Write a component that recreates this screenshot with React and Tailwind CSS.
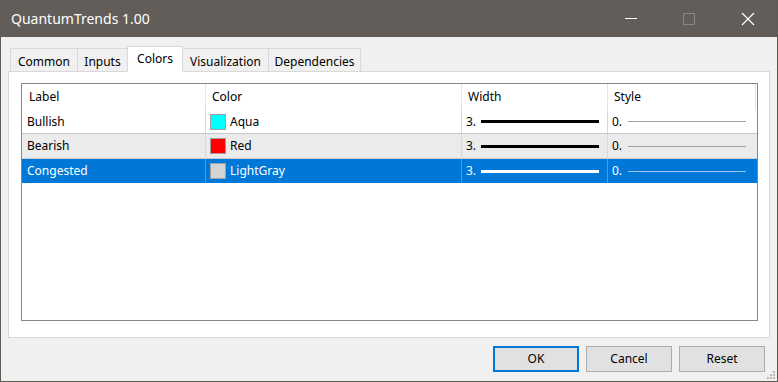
import React from "react";

const font = { fontFamily: '"Noto Sans", "Open Sans", sans-serif' };

const rows = [
  { label: "Bullish", color: "#00ffff", name: "Aqua", bg: "bg-white", sel: false, h: "h-[24px]" },
  { label: "Bearish", color: "#ff0000", name: "Red", bg: "bg-[#ebebeb]", sel: false, h: "h-[25px]" },
  { label: "Congested", color: "#d3d3d3", name: "LightGray", bg: "bg-[#0078d7]", sel: true, h: "h-[24px]" },
];

function Row({ r, last }) {
  const txt = r.sel ? "text-white" : "text-black";
  const div = r.sel ? "border-[#4d9de0]" : "border-[#d9d9d9]";
  return (
    <div
      className={`flex ${r.h} items-center ${r.bg} ${txt} ${last ? "" : "border-b border-[#c9c9c9]"}`}
    >
      <div className={`w-[184px] h-full flex items-center pl-[5px] border-r ${div}`}>{r.label}</div>
      <div className={`w-[256px] h-full flex items-center pl-[4px] border-r ${div}`}>
        <span
          className="w-[16px] h-[16px] border border-[#a0a0a0] mr-[4px]"
          style={{ backgroundColor: r.color }}
        />
        {r.name}
      </div>
      <div className={`w-[146px] h-full flex items-center pl-[4px] border-r ${div}`}>
        <span className="w-[15px]">3.</span>
        <span className={`w-[118px] h-[3px] ${r.sel ? "bg-white" : "bg-black"}`} />
      </div>
      <div className="w-[148px] h-full flex items-center pl-[4px]">
        <span className="w-[16px]">0.</span>
        <span className={`w-[118px] h-px ${r.sel ? "bg-[#9cc6ec]" : "bg-[#a0a0a0]"}`} />
      </div>
    </div>
  );
}

export default function App() {
  return (
    <div
      className="w-[778px] h-[382px] flex flex-col border-x border-b border-[#5e5a56] text-[12px] overflow-hidden"
      style={font}
    >
      {/* title bar */}
      <div className="h-[37px] shrink-0 bg-[#625d58] flex items-center -mx-px">
        <div className="pl-[11px] text-white text-[14px] flex-1">QuantumTrends 1.00</div>
        <div className="flex items-center h-full">
          <div className="w-[58px] h-full flex items-center justify-center">
            <span className="w-[12px] h-px bg-white" />
          </div>
          <div className="w-[58px] h-full flex items-center justify-center">
            <span className="w-[12px] h-[12px] border border-[#8c8782]" />
          </div>
          <div className="w-[60px] h-full flex items-center justify-center pr-[1px]">
            <svg width="14" height="14" viewBox="0 0 14 14">
              <path d="M1 1 L13 13 M13 1 L1 13" stroke="white" strokeWidth="1.2" />
            </svg>
          </div>
        </div>
      </div>

      {/* body */}
      <div className="flex-1 bg-[#f0f0f0] flex flex-col pt-[9px] px-[7px] relative">
        {/* tabs */}
        <div className="flex items-end ml-[2px] h-[25px] text-black">
          <div className="w-[67px] h-[23px] border-l border-t border-[#d9d9d9] flex items-center justify-center pt-[3px]">Common</div>
          <div className="w-[50px] h-[23px] border-l border-t border-[#d9d9d9] flex items-center justify-center pt-[3px]">Inputs</div>
          <div className="relative z-10 w-[56px] h-[26px] -mb-px bg-white border-l border-t border-r border-[#d9d9d9] flex items-center justify-center pb-[2px]">Colors</div>
          <div className="w-[85px] h-[23px] border-t border-[#d9d9d9] flex items-center justify-center pt-[3px]">Visualization</div>
          <div className="w-[93px] h-[23px] border-l border-t border-r border-[#d9d9d9] flex items-center justify-center pt-[3px]">Dependencies</div>
        </div>

        {/* panel */}
        <div className="h-[267px] bg-white border border-[#d9d9d9] pt-[11px] pl-[12px] pr-[11px] pb-[16px] flex">
          <div className="flex-1 border border-[#828790] bg-white text-black flex flex-col">
            <div className="flex h-[26px]">
              <div className="w-[184px] flex items-center pl-[7px] border-r border-[#e5e5e5]">Label</div>
              <div className="w-[256px] flex items-center pl-[6px] border-r border-[#e5e5e5]">Color</div>
              <div className="w-[146px] flex items-center pl-[6px] border-r border-[#e5e5e5]">Width</div>
              <div className="w-[148px] flex items-center pl-[6px] border-r border-[#e5e5e5]">Style</div>
            </div>
            {rows.map((r, i) => (
              <Row key={r.label} r={r} last={i === rows.length - 1} />
            ))}
          </div>
        </div>

        {/* buttons */}
        <div className="flex justify-end gap-[7px] mt-[8px] mr-[5px] text-black">
          <div className="w-[86px] h-[26px] bg-[#e1e1e1] border-2 border-[#0078d7] flex items-center justify-center">OK</div>
          <div className="w-[86px] h-[26px] bg-[#e1e1e1] border border-[#adadad] flex items-center justify-center">Cancel</div>
          <div className="w-[86px] h-[26px] bg-[#e1e1e1] border border-[#adadad] flex items-center justify-center">Reset</div>
        </div>

        {/* size grip */}
        <svg className="absolute right-[1px] bottom-[1px]" width="10" height="10" viewBox="0 0 10 10">
          <rect x="7" y="1" width="2" height="2" fill="#b8b8b8" />
          <rect x="4" y="4" width="2" height="2" fill="#b8b8b8" />
          <rect x="7" y="4" width="2" height="2" fill="#b8b8b8" />
          <rect x="1" y="7" width="2" height="2" fill="#b8b8b8" />
          <rect x="4" y="7" width="2" height="2" fill="#b8b8b8" />
          <rect x="7" y="7" width="2" height="2" fill="#b8b8b8" />
        </svg>
      </div>
    </div>
  );
}
